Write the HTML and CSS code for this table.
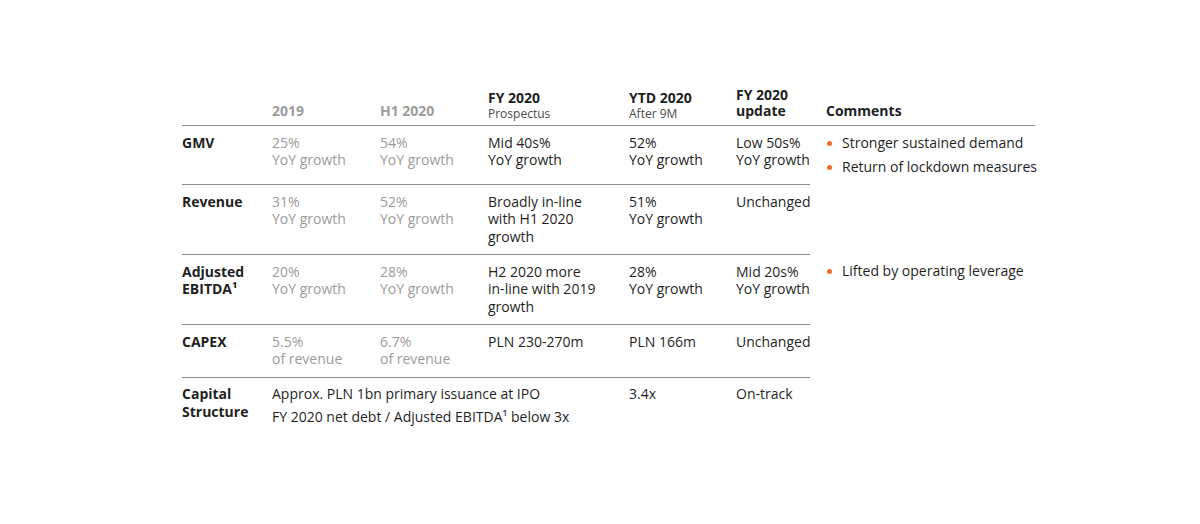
FILE: index.html
```html
<!DOCTYPE html>
<html lang="en">
<head>
<meta charset="utf-8">
<title>FY 2020 guidance</title>
<link rel="stylesheet" href="styles.css">
</head>
<body>
<div class="page">
  <table class="guidance">
    <colgroup>
      <col class="c-label">
      <col class="c-num">
      <col class="c-num">
      <col class="c-pro">
      <col class="c-ytd">
      <col class="c-upd">
      <col class="c-com">
    </colgroup>
    <thead>
      <tr>
        <th></th>
        <th class="muted">2019</th>
        <th class="muted">H1 2020</th>
        <th class="has-sub">FY 2020<span class="sub">Prospectus</span></th>
        <th class="has-sub">YTD 2020<span class="sub">After 9M</span></th>
        <th class="upd-head">FY 2020 update</th>
        <th class="com-head">Comments</th>
      </tr>
    </thead>
    <tbody>
      <tr>
        <th class="label">GMV</th>
        <td class="muted">25%<br>YoY growth</td>
        <td class="muted">54%<br>YoY growth</td>
        <td>Mid 40s%<br>YoY growth</td>
        <td>52%<br>YoY growth</td>
        <td class="upd">Low 50s%<br>YoY growth</td>
        <td class="com">
          <ul class="bullets">
            <li>Stronger sustained demand</li>
            <li>Return of lockdown measures</li>
          </ul>
        </td>
      </tr>
      <tr>
        <th class="label">Revenue</th>
        <td class="muted">31%<br>YoY growth</td>
        <td class="muted">52%<br>YoY growth</td>
        <td>Broadly in-line<br>with H1 2020<br>growth</td>
        <td>51%<br>YoY growth</td>
        <td class="upd">Unchanged</td>
        <td class="com"></td>
      </tr>
      <tr>
        <th class="label">Adjusted<br>EBITDA¹</th>
        <td class="muted">20%<br>YoY growth</td>
        <td class="muted">28%<br>YoY growth</td>
        <td>H2 2020 more<br>in-line with 2019<br>growth</td>
        <td>28%<br>YoY growth</td>
        <td class="upd">Mid 20s%<br>YoY growth</td>
        <td class="com">
          <ul class="bullets">
            <li>Lifted by operating leverage</li>
          </ul>
        </td>
      </tr>
      <tr>
        <th class="label">CAPEX</th>
        <td class="muted">5.5%<br>of revenue</td>
        <td class="muted">6.7%<br>of revenue</td>
        <td>PLN 230-270m</td>
        <td>PLN 166m</td>
        <td class="upd">Unchanged</td>
        <td class="com"></td>
      </tr>
      <tr>
        <th class="label">Capital<br>Structure</th>
        <td colspan="3">
          <p class="line">Approx. PLN 1bn primary issuance at IPO</p>
          <p class="line">FY 2020 net debt / Adjusted EBITDA¹ below 3x</p>
        </td>
        <td>3.4x</td>
        <td class="upd">On-track</td>
        <td class="com"></td>
      </tr>
    </tbody>
  </table>
</div>
</body>
</html>
```

FILE: styles.css
```css
html, body {
  margin: 0;
  padding: 0;
  background: #ffffff;
}

body {
  font-family: "Open Sans", "Noto Sans", "Liberation Sans", sans-serif;
  color: #1f1f1f;
  font-size: 14px;
}

.page {
  padding: 87px 0 0 182px;
}

.guidance {
  table-layout: fixed;
  border-collapse: separate;
  border-spacing: 0;
  width: 853px;
}

.c-label { width: 90px; }
.c-num { width: 108px; }
.c-pro { width: 141px; }
.c-ytd { width: 107px; }
.c-upd { width: 74px; }
.c-com { width: 225px; }

.guidance th,
.guidance td {
  padding: 0;
  text-align: left;
}

/* header */
.guidance thead th {
  vertical-align: bottom;
  font-weight: 700;
  font-size: 14px;
  line-height: 16px;
  padding-bottom: 6px;
  border-bottom: 1px solid #8e8e8e;
  color: #1f1f1f;
}

.guidance thead th.has-sub {
  padding-bottom: 4px;
}

.guidance thead th.muted {
  color: #9c9c9c;
}

.guidance thead th.com-head {
  padding-left: 16px;
}

.sub {
  display: block;
  font-weight: 400;
  font-size: 12px;
  line-height: 15px;
  color: #4a4a4a;
}

/* body */
.guidance tbody th,
.guidance tbody td {
  vertical-align: top;
  line-height: 17.5px;
  padding-top: 7.5px;
  padding-bottom: 9px;
  border-top: 1px solid #8e8e8e;
}

.guidance tbody tr:first-child th,
.guidance tbody tr:first-child td {
  border-top: none;
}

.guidance tbody td.com {
  border-top: none;
  padding-left: 16px;
}

.guidance tbody th.label {
  font-weight: 700;
  color: #1f1f1f;
}

.guidance tbody td.muted {
  color: #9c9c9c;
}

.guidance td.upd {
  white-space: nowrap;
}

.line {
  margin: 0;
}

.line + .line {
  margin-top: 5px;
}

.bullets {
  list-style: none;
  margin: 0;
  padding: 0;
}

.bullets li {
  position: relative;
  padding-left: 16px;
  white-space: nowrap;
}

.bullets li + li {
  margin-top: 6.5px;
}

.bullets li::before {
  content: "";
  position: absolute;
  left: 0.5px;
  top: 7.5px;
  width: 5px;
  height: 5px;
  border-radius: 50%;
  background: #f36c2c;
}
```
